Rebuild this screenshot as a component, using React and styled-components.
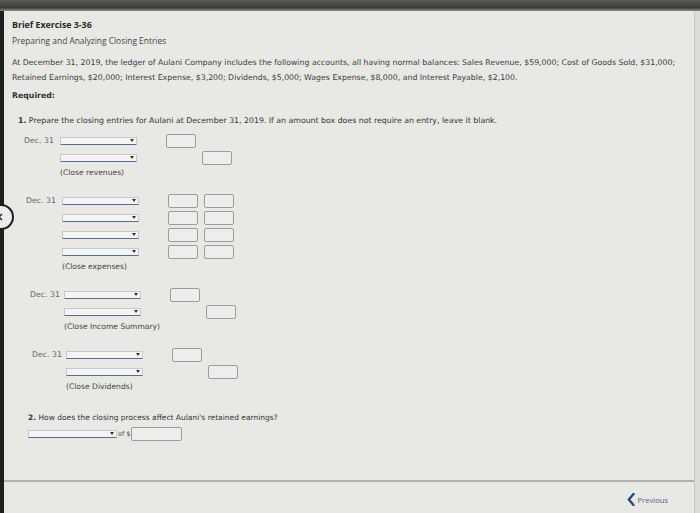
import React from 'react';
import styled, { createGlobalStyle } from 'styled-components';

const GlobalStyle = createGlobalStyle`
  html, body {
    margin: 0;
    padding: 0;
    background: #e8e8e5;
  }
  * { box-sizing: border-box; }
`;

const Screen = styled.div`
  width: 700px;
  height: 513px;
  display: flex;
  flex-direction: column;
  overflow: hidden;
  position: relative;
  background: #e8e8e5;
  font-family: "DejaVu Sans", Verdana, sans-serif;
  color: #3a3a3a;
`;

const TopBar = styled.div`
  height: 11px;
  flex: none;
  background: linear-gradient(#5a5a56, #3c3c3a 70%, #8a8a86);
`;

const Body = styled.div`
  flex: 1;
  display: flex;
  min-height: 0;
`;

const LeftStrip = styled.div`
  width: 4px;
  flex: none;
  background: #1e1e1e;
`;

const RightEdge = styled.div`
  width: 6px;
  flex: none;
  border-left: 1px solid #c4c4c0;
  background: #dcdcd8;
`;

const Content = styled.div`
  flex: 1;
  display: flex;
  flex-direction: column;
  min-width: 0;
`;

const Main = styled.div`
  flex: 1;
  padding: 6px 14px 0 8px;
`;

const Title = styled.div`
  font-family: "Open Sans", "DejaVu Sans", sans-serif;
  font-weight: ${p => (p.bold ? 700 : 400)};
  font-size: ${p => (p.bold ? 8.8 : 8.4)}px;
  line-height: 16px;
  color: ${p => (p.bold ? '#2a2a2a' : '#444')};
`;

const Paragraph = styled.p`
  margin: 6px 0 0;
  font-size: 7.8px;
  line-height: 15px;
  color: #3c3c3c;
`;

const Required = styled.div`
  margin-top: 3px;
  font-size: 7.8px;
  font-weight: 700;
  line-height: 15px;
  color: #333;
`;

const Question = styled.div`
  margin: ${p => p.top}px 0 0 ${p => p.left}px;
  font-size: ${p => p.size}px;
  line-height: 12px;
  color: #333;
  b { font-weight: 700; }
`;

const Block = styled.div`
  margin: ${p => p.top}px 0 0 ${p => p.left}px;
  display: grid;
  grid-template-columns: ${p => p.labelWidth}px 77px 29px 30px 6px 30px;
  grid-auto-rows: 17px;
  align-items: center;
`;

const DateLabel = styled.div`
  grid-column: 1;
  font-size: 7.8px;
  color: #666;
`;

const Select = styled.div`
  grid-column: 2;
  height: 8px;
  width: ${p => p.width || 77}px;
  background: #f4f4f2;
  border: 1px solid #c6c8d0;
  border-bottom: 1.5px solid #5c6a96;
  border-radius: 1px;
  position: relative;
  flex: none;
  &::after {
    content: '';
    position: absolute;
    right: 2px;
    top: 1px;
    border-left: 2px solid transparent;
    border-right: 2px solid transparent;
    border-top: 3px solid #333;
  }
`;

const AmountBox = styled.div`
  grid-column: ${p => (p.credit ? 6 : 4)};
  grid-row: ${p => p.row};
  width: ${p => p.width || 30}px;
  height: 14px;
  flex: none;
  background: #ededeb;
  border: 1.5px solid #9c9c9a;
  border-radius: 2px;
`;

const Caption = styled.div`
  grid-column: 2 / span 5;
  font-size: 7.6px;
  color: #444;
  line-height: 14px;
  align-self: start;
`;

const AnswerRow = styled.div`
  margin: 3px 0 0 16px;
  display: flex;
  align-items: center;
  gap: 1px;
  font-size: 6.5px;
  color: #555;
`;

const Footer = styled.div`
  height: 33px;
  flex: none;
  border-top: 2px solid #b0b0ad;
  display: flex;
  justify-content: flex-end;
  align-items: center;
  padding: 4px 26px 0 0;
`;

const PrevButton = styled.div`
  display: flex;
  align-items: center;
  gap: 3px;
  font-family: "Open Sans", "DejaVu Sans", sans-serif;
  font-size: 7.6px;
  color: #55648e;
  svg { display: block; }
`;

const SideNav = styled.div`
  position: absolute;
  left: -12px;
  top: 204px;
  width: 26px;
  height: 26px;
  border-radius: 50%;
  border: 2px solid #1e1e1e;
  background: #ececea;
  display: flex;
  align-items: center;
  justify-content: flex-end;
  padding-right: 9px;
`;

const Entry = ({ top, left, labelWidth = 36, rows, caption }) => (
  <Block top={top} left={left} labelWidth={labelWidth}>
    {rows.map((r, i) => (
      <React.Fragment key={i}>
        {i === 0 ? <DateLabel style={{ gridRow: 1 }}>Dec. 31</DateLabel> : null}
        <Select style={{ gridRow: i + 1 }} />
        {r.debit ? <AmountBox row={i + 1} /> : null}
        {r.credit ? <AmountBox row={i + 1} credit /> : null}
      </React.Fragment>
    ))}
    <Caption style={{ gridRow: rows.length + 1 }}>{caption}</Caption>
  </Block>
);

const App = () => (
  <>
    <GlobalStyle />
    <Screen>
      <TopBar />
      <Body>
        <LeftStrip />
        <Content>
          <Main>
            <Title bold>Brief Exercise 3-36</Title>
            <Title>Preparing and Analyzing Closing Entries</Title>
            <Paragraph>
              At December 31, 2019, the ledger of Aulani Company includes the following accounts, all having normal balances: Sales Revenue, $59,000; Cost of Goods Sold, $31,000; Retained Earnings, $20,000; Interest Expense, $3,200; Dividends, $5,000; Wages Expense, $8,000, and Interest Payable, $2,100.
            </Paragraph>
            <Required>Required:</Required>
            <Question top={12} left={6} size={7.8}>
              <b>1.</b> Prepare the closing entries for Aulani at December 31, 2019. If an amount box does not require an entry, leave it blank.
            </Question>
            <Entry
              top={5}
              left={12}
              rows={[{ debit: true }, { credit: true }]}
              caption="(Close revenues)"
            />
            <Entry
              top={9}
              left={14}
              rows={[
                { debit: true, credit: true },
                { debit: true, credit: true },
                { debit: true, credit: true },
                { debit: true, credit: true },
              ]}
              caption="(Close expenses)"
            />
            <Entry
              top={9}
              left={18}
              labelWidth={34}
              rows={[{ debit: true }, { credit: true }]}
              caption="(Close Income Summary)"
            />
            <Entry
              top={9}
              left={20}
              labelWidth={34}
              rows={[{ debit: true }, { credit: true }]}
              caption="(Close Dividends)"
            />
            <Question top={15} left={16} size={7.5}>
              <b>2.</b> How does the closing process affect Aulani&apos;s retained earnings?
            </Question>
            <AnswerRow>
              <Select width={89} />
              <span>of $</span>
              <AmountBox width={51} />
            </AnswerRow>
          </Main>
          <Footer>
            <PrevButton>
              <svg width="8" height="13" viewBox="0 0 8 13">
                <path d="M6.5 1 L1.8 6.5 L6.5 12" fill="none" stroke="#23468f" strokeWidth="2.4" strokeLinecap="round" strokeLinejoin="round" />
              </svg>
              <span>Previous</span>
            </PrevButton>
          </Footer>
        </Content>
        <RightEdge />
      </Body>
      <SideNav>
        <svg width="5" height="8" viewBox="0 0 5 8">
          <path d="M4 1 L1 4 L4 7" fill="none" stroke="#1e1e1e" strokeWidth="1.4" />
        </svg>
      </SideNav>
    </Screen>
  </>
);

export default App;
